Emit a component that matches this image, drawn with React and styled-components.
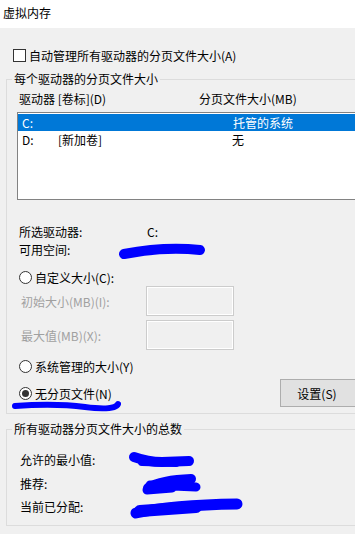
import styled, { createGlobalStyle } from "styled-components";

const GlobalStyle = createGlobalStyle`
    html, body {
        margin: 0;
        padding: 0;
        background: #f0f0f0;
    }
    * {
        box-sizing: border-box;
    }
`

const Window = styled.div`
    position: relative;
    width: 355px;
    height: 534px;
    overflow: hidden;
    background: #f0f0f0;
    color: #000;
    font-family: "Noto Sans CJK SC", "Microsoft YaHei", sans-serif;
    font-size: 12px;
`

const TitleBar = styled.div`
    height: 28px;
    line-height: 26px;
    padding-left: 3px;
    background: #fff;
`

const Body = styled.div`
    padding-left: 6px;
`

const CheckRow = styled.label`
    display: flex;
    align-items: center;
    gap: 3px;
    height: 18px;
    margin: 18px 0 0 7px;
`

const CheckBox = styled.span`
    width: 13px;
    height: 13px;
    border: 1px solid #333;
    background: #fff;
`

const Group = styled.fieldset`
    width: 440px;
    margin: ${({ $top }) => $top}px 0 0 0;
    padding: 0;
    border: 1px solid #dcdcdc;
    min-width: 0;
`

const Legend = styled.legend`
    margin-left: 5px;
    padding: 0 2px;
    line-height: 16px;
`

const GroupInner = styled.div`
    padding: ${({ $pad }) => $pad};
`

const ColumnHeader = styled.div`
    display: flex;
    height: 16px;
    line-height: 16px;
    margin: 4px 0 0 2px;

    > span:first-child {
        width: 180px;
    }
`

const DriveList = styled.div`
    height: 88px;
    margin-top: 5px;
    padding-top: 1px;
    border: 1px solid #828282;
    background: #fff;
`

const DriveRow = styled.div`
    display: flex;
    height: 17px;
    line-height: 17px;
    padding-left: 4px;
    background: ${({ $selected }) => ($selected ? "#0078d7" : "transparent")};
    color: ${({ $selected }) => ($selected ? "#fff" : "#000")};
`

const Cell = styled.span`
    width: ${({ $w }) => $w}px;
    flex-shrink: 0;
`

const Spacer = styled.div`
    height: ${({ $h }) => $h}px;
`

const InfoRow = styled.div`
    display: flex;
    height: ${({ $h }) => $h || 18}px;
    line-height: ${({ $h }) => $h || 18}px;
    margin-left: ${({ $indent }) => $indent ?? 2}px;

    > span:first-child {
        width: ${({ $label }) => $label || 128}px;
    }
`

const RadioRow = styled.label`
    display: flex;
    align-items: center;
    gap: 3px;
    height: 18px;
    margin: ${({ $top }) => $top}px 0 0 ${({ $left }) => $left ?? 2}px;
`

const RadioCircle = styled.span`
    position: relative;
    width: 13px;
    height: 13px;
    border: 1px solid #333;
    border-radius: 50%;
    background: #fff;

    &::after {
        content: "";
        display: ${({ $checked }) => ($checked ? "block" : "none")};
        position: absolute;
        left: 2px;
        top: 2px;
        width: 7px;
        height: 7px;
        border-radius: 50%;
        background: #333;
    }
`

const SizeRow = styled.div`
    display: flex;
    align-items: center;
    height: 30px;
    margin: ${({ $top }) => $top}px 0 0 4px;
    color: #a0a0a0;

    > span {
        width: 125px;
    }
`

const SizeInput = styled.div`
    width: 88px;
    height: 30px;
    border: 1px solid #cccccc;
    box-shadow: inset 0 0 0 1px #fff;
    background: #f0f0f0;
`

const ButtonRow = styled.div`
    display: flex;
    align-items: center;
    width: 343px;
    height: 28px;
    margin: 4px 0 0 2px;

    > button {
        margin-left: auto;
    }
`

const Button = styled.button`
    width: 82px;
    height: 28px;
    padding: 0 8px 0 0;
    border: 1px solid #adadad;
    background: #e1e1e1;
    font: inherit;
    color: #000;
`

const Scribbles = styled.svg`
    position: absolute;
    left: 0;
    top: 0;
    pointer-events: none;
`

function Radio({ checked, top, left, children }) {
    return (
        <RadioRow $top={top} $left={left}>
            <RadioCircle $checked={checked} />
            <span>{children}</span>
        </RadioRow>
    )
}

export default function App() {
    return (
        <Window>
            <GlobalStyle />
            <TitleBar>虚拟内存</TitleBar>
            <Body>
                <CheckRow>
                    <CheckBox />
                    <span>自动管理所有驱动器的分页文件大小(A)</span>
                </CheckRow>

                <Group $top={7}>
                    <Legend>每个驱动器的分页文件大小</Legend>
                    <GroupInner $pad="0 0 6px 10px">
                        <ColumnHeader>
                            <span>驱动器 [卷标](D)</span>
                            <span>分页文件大小(MB)</span>
                        </ColumnHeader>
                        <DriveList>
                            <DriveRow $selected>
                                <Cell $w={36}>C:</Cell>
                                <Cell $w={175}></Cell>
                                <Cell $w={120}>托管的系统</Cell>
                            </DriveRow>
                            <DriveRow>
                                <Cell $w={36}>D:</Cell>
                                <Cell $w={174}>[新加卷]</Cell>
                                <Cell $w={120}>无</Cell>
                            </DriveRow>
                        </DriveList>

                        <Spacer $h={23} />
                        <InfoRow>
                            <span>所选驱动器:</span>
                            <span>C:</span>
                        </InfoRow>
                        <InfoRow>
                            <span>可用空间:</span>
                            <span></span>
                        </InfoRow>

                        <Radio top={9}>自定义大小(C):</Radio>
                        <SizeRow $top={0}>
                            <span>初始大小(MB)(I):</span>
                            <SizeInput />
                        </SizeRow>
                        <SizeRow $top={4}>
                            <span>最大值(MB)(X):</span>
                            <SizeInput />
                        </SizeRow>
                        <Radio top={7}>系统管理的大小(Y)</Radio>
                        <ButtonRow>
                            <Radio top={0} left={0} checked>无分页文件(N)</Radio>
                            <Button>设置(S)</Button>
                        </ButtonRow>
                    </GroupInner>
                </Group>

                <Group $top={7}>
                    <Legend>所有驱动器分页文件大小的总数</Legend>
                    <GroupInner $pad="11px 0 6px 13px">
                        <InfoRow $h={23.5} $indent={0} $label={120}>
                            <span>允许的最小值:</span>
                        </InfoRow>
                        <InfoRow $h={23.5} $indent={0} $label={120}>
                            <span>推荐:</span>
                        </InfoRow>
                        <InfoRow $h={23.5} $indent={0} $label={120}>
                            <span>当前已分配:</span>
                        </InfoRow>
                    </GroupInner>
                </Group>
            </Body>

            <Scribbles width="355" height="534" viewBox="0 0 355 534">
                <g fill="none" stroke="#0000ff" strokeLinecap="round" strokeLinejoin="round">
                    <path d="M124 254 Q 165 246 200 250" strokeWidth="10" />
                    <path d="M15 406 Q 55 403 85 407 T 118 404" strokeWidth="6" />
                    <path d="M134 457 Q 148 462 162 462 L 189 461" strokeWidth="10" />
                    <path d="M142 462 L 176 463" strokeWidth="8" />
                    <path d="M148 488 Q 162 480 191 479" strokeWidth="10" />
                    <path d="M150 485 L 196 487 M147 490 L 172 488" strokeWidth="9" />
                    <path d="M136 513 Q 172 505 237 504" strokeWidth="11" />
                    <path d="M140 511 L 196 507" strokeWidth="12" />
                </g>
            </Scribbles>
        </Window>
    )
}
